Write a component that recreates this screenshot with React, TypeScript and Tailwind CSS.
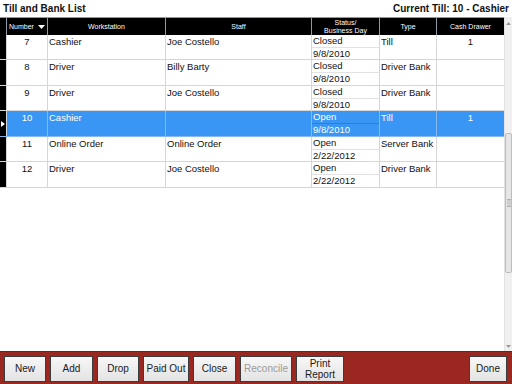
import React from "react";

type Row = {
  num: string;
  ws: string;
  staff: string;
  status: string;
  day: string;
  type: string;
  drawer: string;
  h: string;
  sel?: boolean;
};

const rows: Row[] = [
  { num: "7", ws: "Cashier", staff: "Joe Costello", status: "Closed", day: "9/8/2010", type: "Till", drawer: "1", h: "h-[25px]" },
  { num: "8", ws: "Driver", staff: "Billy Barty", status: "Closed", day: "9/8/2010", type: "Driver Bank", drawer: "", h: "h-[26px]" },
  { num: "9", ws: "Driver", staff: "Joe Costello", status: "Closed", day: "9/8/2010", type: "Driver Bank", drawer: "", h: "h-[25px]" },
  { num: "10", ws: "Cashier", staff: "", status: "Open", day: "9/8/2010", type: "Till", drawer: "1", h: "h-[26px]", sel: true },
  { num: "11", ws: "Online Order", staff: "Online Order", status: "Open", day: "2/22/2012", type: "Server Bank", drawer: "", h: "h-[25px]" },
  { num: "12", ws: "Driver", staff: "Joe Costello", status: "Open", day: "2/22/2012", type: "Driver Bank", drawer: "", h: "h-[26px]" },
];

function HeaderRow() {
  const cell = "h-full flex items-center justify-center border-r border-[#8d99a6] text-white text-[7px] leading-[8px] text-center";
  return (
    <div className="flex h-[18px] bg-black border-t border-[#8d99a6]">
      <div className="w-[7px] h-full border-r border-[#8d99a6]" />
      <div className={`${cell} w-[41px] gap-[4px]`}>
        <span>Number</span>
        <svg width="7" height="4" viewBox="0 0 7 4">
          <polygon points="0,0 7,0 3.5,4" fill="#fff" />
        </svg>
      </div>
      <div className={`${cell} w-[118px]`}>Workstation</div>
      <div className={`${cell} w-[146px]`}>Staff</div>
      <div className={`${cell} w-[68px] flex-col`}>
        <span>Status/</span>
        <span>Business Day</span>
      </div>
      <div className={`${cell} w-[57px]`}>Type</div>
      <div className={`${cell} w-[67px] border-r-0`}>Cash Drawer</div>
    </div>
  );
}

function DataRow({ r }: { r: Row }) {
  const line = r.sel ? "border-[#86b9ee]" : "border-[#d6d6d6]";
  const text = r.sel ? "text-white" : "text-[#111]";
  const bg = r.sel ? "bg-[#3a96f4]" : "bg-white";
  return (
    <div className={`flex ${r.h} border-b ${line} ${bg} ${text} text-[9.5px] leading-[13px]`}>
      <div className="w-[7px] h-full border-r border-[#d6d6d6] bg-white flex">
        <div className="w-[6px] h-full bg-black flex items-center">
          {r.sel ? (
            <svg width="4" height="6" viewBox="0 0 4 6" className="ml-[1px]">
              <polygon points="0,0 4,3 0,6" fill="#fff" />
            </svg>
          ) : null}
        </div>
      </div>
      <div className={`w-[41px] h-full border-r ${line} text-center`}>{r.num}</div>
      <div className={`w-[118px] h-full border-r ${line} pl-[1px]`}>{r.ws}</div>
      <div className={`w-[146px] h-full border-r ${line} pl-[1px]`}>{r.staff}</div>
      <div className={`w-[68px] h-full border-r ${line} flex flex-col`}>
        <div className={`h-[13px] border-b ${r.sel ? "border-[#2f7fd6]" : "border-[#e2e2e2]"} pl-[1px] leading-[12px]`}>{r.status}</div>
        <div className="flex-1 pl-[1px] leading-[12px]">{r.day}</div>
      </div>
      <div className={`w-[57px] h-full border-r ${line} pl-[1px]`}>{r.type}</div>
      <div className="w-[67px] h-full text-center">{r.drawer}</div>
    </div>
  );
}

function Scrollbar() {
  return (
    <div className="w-[8px] h-full bg-[#f0f0f0] border-l border-[#e2e2e2] flex flex-col items-center">
      <div className="h-[12px] w-full flex items-center justify-center">
        <svg width="5" height="3" viewBox="0 0 5 3">
          <polygon points="0,3 5,3 2.5,0" fill="#9a9a9a" />
        </svg>
      </div>
      <div className="mt-[104px] h-[140px] w-[7px] bg-[#e6e6e6] border border-[#bdbdbd] rounded-[2px] flex items-center justify-center">
        <div className="w-[4px] h-[8px] bg-[#cfcfcf] border-y border-[#b0b0b0]" />
      </div>
      <div className="flex-1" />
      <div className="h-[10px] w-full flex items-center justify-center">
        <svg width="5" height="3" viewBox="0 0 5 3">
          <polygon points="0,0 5,0 2.5,3" fill="#9a9a9a" />
        </svg>
      </div>
    </div>
  );
}

function Btn({ label, w, disabled }: { label: React.ReactNode; w: string; disabled?: boolean }) {
  return (
    <button
      className={`${w} h-[26px] border border-[#3c3c3c] bg-gradient-to-b from-[#f7f7f7] to-[#e3e3e3] text-[10px] leading-[11px] flex items-center justify-center text-center ${
        disabled ? "text-[#9c9c9c]" : "text-[#1a1a1a]"
      }`}
    >
      {label}
    </button>
  );
}

export default function App() {
  return (
    <div className="w-[512px] h-[384px] bg-white flex flex-col overflow-hidden font-['Liberation_Sans',Arial,sans-serif]">
      <div className="h-[17px] flex items-center justify-between px-[3px] text-[10px] font-bold text-[#111]">
        <span>Till and Bank List</span>
        <span>Current Till: 10 - Cashier</span>
      </div>
      <div className="flex-1 flex min-h-0">
        <div className="w-[504px] flex flex-col">
          <HeaderRow />
          {rows.map((r) => (
            <DataRow key={r.num} r={r} />
          ))}
        </div>
        <Scrollbar />
      </div>
      <div className="h-[33px] bg-[#9b2721] border-t border-[#7a1c17] flex items-center pl-[4px] pr-[5px] pt-[1px]">
        <div className="flex gap-[4px]">
          <Btn label="New" w="w-[42px]" />
          <Btn label="Add" w="w-[43px]" />
          <Btn label="Drop" w="w-[42px]" />
          <Btn label="Paid Out" w="w-[46px]" />
          <Btn label="Close" w="w-[43px]" />
          <Btn label="Reconcile" w="w-[52px]" disabled />
          <Btn label={<span>Print<br />Report</span>} w="w-[48px]" />
        </div>
        <div className="flex-1" />
        <Btn label="Done" w="w-[38px]" />
      </div>
    </div>
  );
}
